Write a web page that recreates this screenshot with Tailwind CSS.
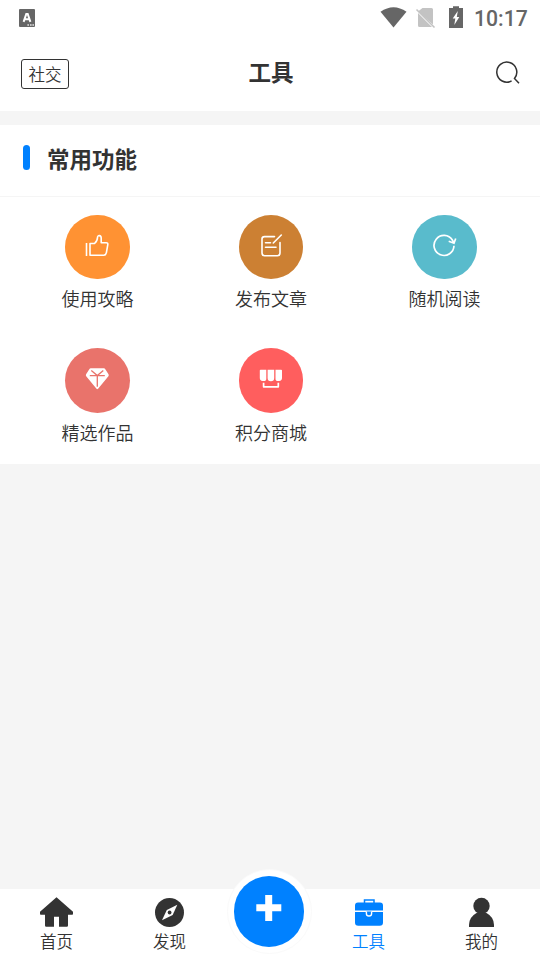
<!DOCTYPE html>
<html lang="zh-CN">
<head>
<meta charset="UTF-8">
<meta name="viewport" content="width=device-width, initial-scale=1">
<title>工具</title>
<script src="https://cdn.jsdelivr.net/npm/@tailwindcss/browser@4"></script>
</head>
<body class="bg-[#f5f5f5] text-[#333] font-['Noto_Sans_CJK_SC',sans-serif] font-[350]">
<div class="flex flex-col w-[540px] h-[960px] overflow-hidden">
  <!-- status bar -->
  <div class="flex h-9 shrink-0 bg-white text-[#666]">
    <svg class="w-10 h-9" viewBox="0 0 40 36"><rect x="19" y="9" width="16" height="18" rx="1" fill="#666"/><path d="M23.600 21.800 26.300 14h1.400l2.700 7.800M24.900 19.200h4.200" fill="none" stroke="#fff" stroke-width="2"/><path d="M27.500 25h1.300M30.200 25h1.300M32.500 25h1.300" stroke="#fff" stroke-width="1.300"/></svg>
    <svg class="ml-auto w-[94px] h-9" viewBox="380 0 94 36">
      <path d="M380.500 11.800Q393.500 2.500 406.500 11.800L393.500 27.500Z" fill="#666"/>
      <path d="M422.500 8H431.500a1.500 1.500 0 0 1 1.500 1.500V24.500L418 11.500ZM418 13 432 27H419.500a1.500 1.500 0 0 1-1.500-1.500Z" fill="#c3c3c3"/>
      <path d="M416.500 9.500 434.500 27.500" stroke="#c3c3c3" stroke-width="1.600"/>
      <path d="M449 8h4V6.200h6V8h4v20h-14Z" fill="#666"/>
      <path d="M457.800 11 452.700 18.600h2.600L454.300 25 459.300 17h-2.500Z" fill="#fff"/>
    </svg>
    <div class="w-[66px] pt-px text-[21.200px] leading-9 font-medium font-[Roboto,sans-serif]">10:17</div>
  </div>
  <!-- header -->
  <header class="grid grid-cols-3 h-[75px] shrink-0 bg-white">
    <div class="pl-[21px] pt-[23px]"><div class="w-12 h-[30px] rounded-[3px] border border-[#333] text-center text-[16.500px] leading-[28px]">社交</div></div>
    <h1 class="pt-[15px] pl-[2px] text-center text-[22.500px] leading-10 font-bold">工具</h1>
    <svg class="ml-auto mr-[18px] mt-[23px] w-[26px] h-7" viewBox="496 59 26 28" fill="none" stroke="#333" stroke-width="1.500"><path d="M511.600 80.900A10 10 0 1 1 514.500 78.500L519 83.200"/></svg>
  </header>
  <!-- tools -->
  <main class="mt-[14px] bg-white h-[339px] shrink-0">
    <div class="flex h-[72px] border-b border-[#f5f5f5] pl-[23px]">
      <div class="mt-5 w-[7px] h-[25px] rounded-full bg-[#0081ff]"></div>
      <h2 class="ml-[17px] mt-[13px] h-10 text-[22.500px] leading-10 font-bold">常用功能</h2>
    </div>
    <div class="grid grid-cols-[repeat(3,173.500px)] auto-rows-[133.500px] pl-[10.700px] pt-[17.600px] text-[18px]">
      <div class="flex flex-col items-center">
        <div class="flex items-center justify-center size-[64.500px] shrink-0 rounded-full bg-[#ff9233]"><svg class="w-7 h-7 -mt-[3px]" viewBox="83 231 28 28" fill="none" stroke="#fff" stroke-width="1.600" stroke-linejoin="round"><path d="M86.500 243v13M90 243.500h4.500c2-1.700 3-3.500 3-6 0-2.700 3.700-2.500 3.700.5v4.700h5q2 .1 1.600 2l-1.400 8q-.4 2.300-2.500 2.500H90Z"/></svg></div>
        <div class="mt-[4px] leading-[30px]">使用攻略</div>
      </div>
      <div class="flex flex-col items-center">
        <div class="flex items-center justify-center size-[64.500px] shrink-0 rounded-full bg-[#cc8033]"><svg class="w-7 h-7 -mt-[3px]" viewBox="257 231 28 28" fill="none" stroke="#fff" stroke-width="1.600" stroke-linecap="round"><path d="M274.500 236.600h-10q-2.500 0-2.500 2.500v14q0 2.600 2.500 2.600h13q2.500 0 2.500-2.600v-10.600M265.500 242.700h5M265.500 247.200h10.500M273.300 243l8-8"/></svg></div>
        <div class="mt-[4px] leading-[30px]">发布文章</div>
      </div>
      <div class="flex flex-col items-center">
        <div class="flex items-center justify-center size-[64.500px] shrink-0 rounded-full bg-[#59bbcc]"><svg class="w-7 h-7 -mt-[3px]" viewBox="430 231.200 28 28" fill="none" stroke="#fff" stroke-width="1.700"><path d="M454 246A10 10 0 1 1 452.400 240.200L453.700 242.800M448.700 241.500 454 243.400 455.700 238.700"/></svg></div>
        <div class="mt-[4px] leading-[30px]">随机阅读</div>
      </div>
      <div class="flex flex-col items-center">
        <div class="flex items-center justify-center size-[64.500px] shrink-0 rounded-full bg-[#e9736b]"><svg class="w-7 h-7 -mt-[3px]" viewBox="83.200 364.700 28 28"><path d="M91 368h13q1 0 1.500 1l3.200 5q.6 1-.1 1.900L98.300 388.500q-.8.900-1.600 0L86.400 375.900q-.7-.9-.1-1.900l3.200-5q.5-1 1.500-1Z" fill="#fff"/><path d="M90 375.300h15M91.500 370.300l6 5 6-5M97.500 375v11.500" fill="none" stroke="#e9736b" stroke-width="1.300"/></svg></div>
        <div class="mt-[4px] leading-[30px]">精选作品</div>
      </div>
      <div class="flex flex-col items-center">
        <div class="flex items-center justify-center size-[64.500px] shrink-0 rounded-full bg-[#ff5e5e]"><svg class="w-7 h-7 -mt-[3px]" viewBox="257.200 364.800 28 28"><path d="M260.800 369.500h5.700v8.500a2.500 2.500 0 0 1-2.500 2.800h-1.200q-2.800-.3-2.800-3v-7.500q0-.8.800-.8ZM267.800 369.500h6.600v8.300a3.200 3.200 0 0 1-6.600 0ZM275.700 369.500h5.700q.8 0 .8.800v7.500q0 2.700-2.800 3h-1.200a2.500 2.500 0 0 1-2.500-2.800Z" fill="#fff"/><path d="M263.800 382.500V386.600h14.700V382.500" fill="none" stroke="#fff" stroke-width="1.700" stroke-linejoin="round"/></svg></div>
        <div class="mt-[4px] leading-[30px]">积分商城</div>
      </div>
    </div>
  </main>
  <!-- tab bar -->
  <nav class="flex mt-auto h-[71px] shrink-0 bg-white text-[16.500px]">
    <div class="flex flex-col items-center w-[113px]">
      <svg class="mt-[7px] w-9 h-8" viewBox="39 896 36 32" fill="#333"><path d="M56.500 897.300 73 911.700V914q0 .8-.8.800H68v10.700q0 1.200-1.200 1.200H59v-9.900h-5v9.900h-7.800q-1.200 0-1.200-1.200V914.800h-4.200q-.8 0-.8-.8v-2.300Z"/></svg>
      <div class="-mt-px leading-7">首页</div>
    </div>
    <div class="flex flex-col items-center w-[113px]">
      <svg class="mt-[7px] w-9 h-8" viewBox="152 896 36 32"><circle cx="169.500" cy="912.400" r="14.500" fill="#333"/><path d="M177.300 904.800 172.700 915 162 920.300 166.800 910Z" fill="#fff"/><circle cx="169.600" cy="912.500" r="1.900" fill="#333"/></svg>
      <div class="-mt-px leading-7">发现</div>
    </div>
    <div class="flex justify-center w-[86px]">
      <div class="flex shrink-0 items-center justify-center -mt-[20px] size-[85px] rounded-full border border-[#fafafa] bg-white">
        <div class="flex items-center justify-center w-[70px] h-[71px] rounded-full bg-[#0081ff]"><svg class="w-[26px] h-[26px] -mt-[7px]" viewBox="0 0 26 26"><path d="M12.700 0v26M.3 12.800h25" stroke="#fff" stroke-width="7"/></svg></div>
      </div>
    </div>
    <div class="flex flex-col items-center w-[113px] text-[#0081ff]">
      <svg class="mt-[7px] w-9 h-8" viewBox="351 896 36 32"><path d="M364.500 903.500V900h9.500v3.500" fill="none" stroke="#0081ff" stroke-width="1.500"/><path d="M358 902.500h22q3 0 3 3V910.500H355v-5q0-3 3-3ZM355 912h28v10.500q0 3.300-3.300 3.300H358.300q-3.300 0-3.300-3.300Z" fill="#0081ff"/><path d="M366.400 911.500v1.900a2.600 2.600 0 0 0 5.200 0v-1.900" fill="#0081ff" stroke="#fff" stroke-width="1.400"/></svg>
      <div class="-mt-px leading-7">工具</div>
    </div>
    <div class="flex flex-col items-center w-[113px]">
      <svg class="mt-[7px] w-9 h-8" viewBox="464 896 36 32" fill="#333"><circle cx="481.500" cy="906" r="8.200"/><path d="M469 927v-2.200q.2-7.800 7.500-11.800h10q7.300 4 7.500 11.800V927Z"/></svg>
      <div class="-mt-px leading-7">我的</div>
    </div>
  </nav>
</div>
</body>
</html>
